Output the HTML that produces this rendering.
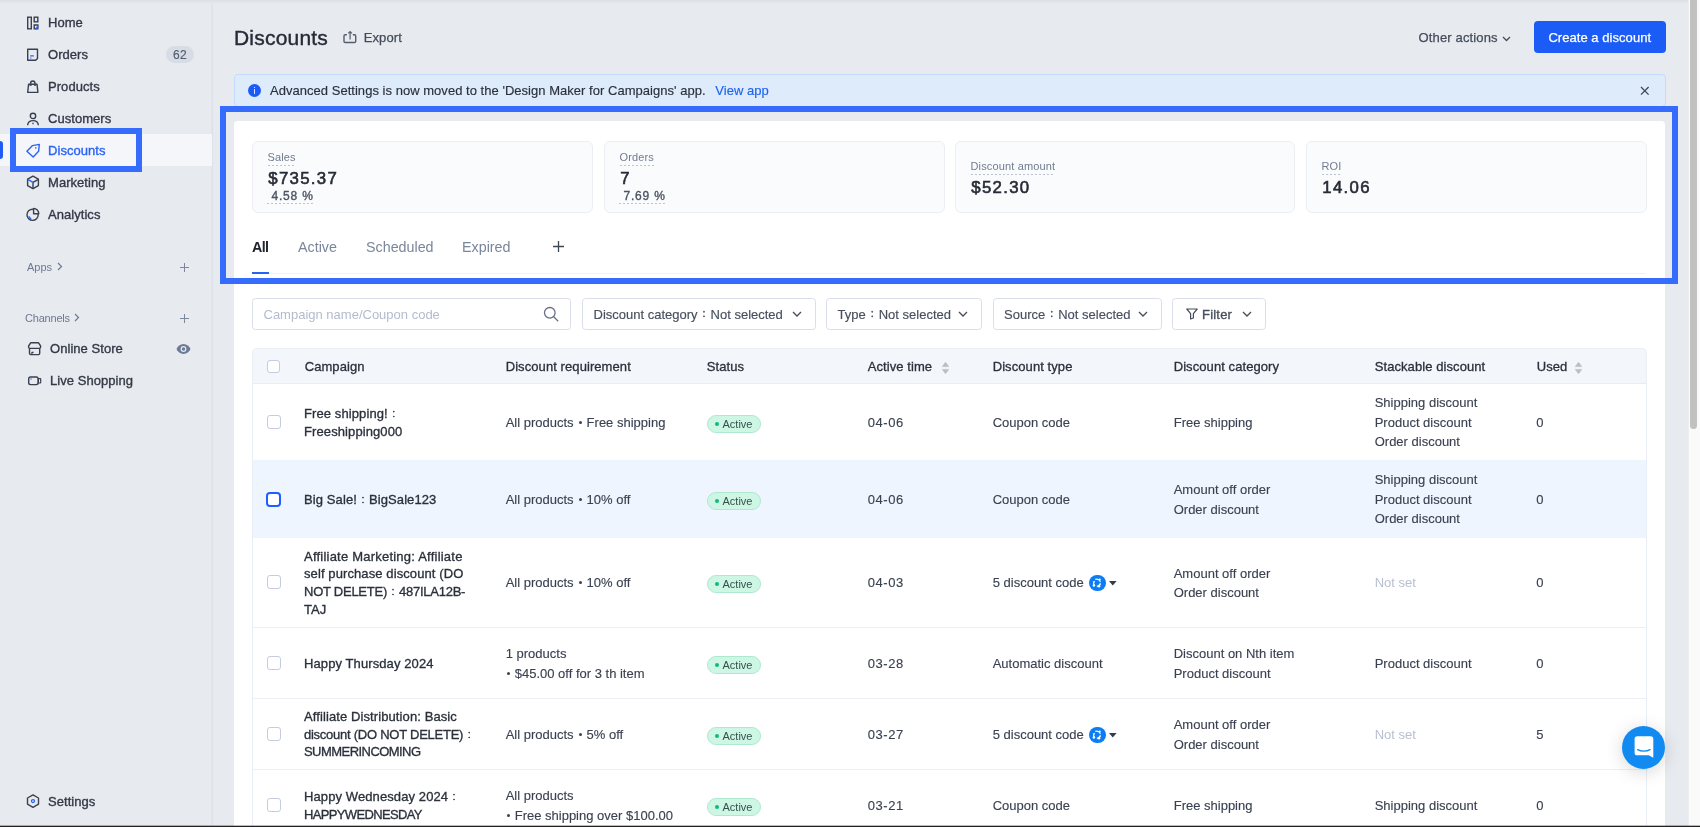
<!DOCTYPE html>
<html lang="en">
<head>
<meta charset="utf-8">
<title>Discounts</title>
<style>
*{box-sizing:border-box;margin:0;padding:0}
html,body{width:1700px;height:827px;overflow:hidden}
body{position:relative;background:#e7eaef;font-family:"Liberation Sans","Noto Sans CJK TC",sans-serif;font-size:13px;color:#2f3440;-webkit-font-smoothing:antialiased}
#app{position:absolute;left:0;top:0;width:1700px;height:827px;overflow:hidden;will-change:transform}
.abs{position:absolute}
svg{display:block}
/* top shade */
#topshade{left:0;top:0;width:1688px;height:4px;background:linear-gradient(#dcdfe4,#e7eaef)}
/* sidebar */
#sidebar{left:0;top:0;width:213px;height:827px;border-right:1px solid #dde1ea;box-shadow:inset -1px 0 0 rgba(221,225,234,.5)}
.nav{position:absolute;left:0;width:212px;height:32px}
.nav .ic{position:absolute;left:25px;top:8px;width:16px;height:16px}
.nav .tx{position:absolute;left:48px;top:1px;line-height:32px;font-size:13px;font-weight:400;color:#333946;-webkit-text-stroke:.35px #333946;letter-spacing:.05px;white-space:nowrap}
.nav.active{background:#f5f6fa}
.nav.active .tx{color:#2a63f6;-webkit-text-stroke-color:#2a63f6}
.sec{position:absolute;font-size:11px;color:#6d7a90;white-space:nowrap;line-height:14px}
.plus{position:absolute;width:9px;height:9px}
.plus:before{content:"";position:absolute;left:0;top:4px;width:9px;height:1px;background:#7c879b}
.plus:after{content:"";position:absolute;left:4px;top:0;width:1px;height:9px;background:#7c879b}
/* highlight boxes */
.hl{position:absolute;border:6px solid #366cfe;pointer-events:none}
/* header */
#title{left:234px;top:24px;font-size:21px;line-height:28px;font-weight:400;color:#262b36;-webkit-text-stroke:.4px #262b36;letter-spacing:.2px;white-space:nowrap}
#export{left:363.700px;top:29.500px;letter-spacing:.1px;-webkit-text-stroke:.25px #444c5b;font-size:13px;line-height:16px;color:#444c5b;white-space:nowrap}
#other{left:1418.500px;top:30px;letter-spacing:.15px;-webkit-text-stroke:.25px #444c5b;font-size:13px;line-height:16px;color:#444c5b;white-space:nowrap}
#create{left:1534px;top:21px;width:131.500px;height:32px;border-radius:4px;background:#1b5cf6;color:#fff;-webkit-text-stroke:.25px #fff;font-size:13px;line-height:33px;letter-spacing:.05px;text-align:center;white-space:nowrap}
/* banner */
#banner{left:234px;top:74px;width:1432px;height:33px;background:#ddebfb;border:1px solid #c4dcfb;border-radius:4px}
#banner .t{position:absolute;left:35px;top:8px;-webkit-text-stroke:.15px #2b303b;line-height:16px;font-size:13px;color:#2b303b;white-space:nowrap;letter-spacing:.03px}
#banner a{color:#1e63f0;-webkit-text-stroke:.15px #1e63f0;margin-left:6px;text-decoration:none}
/* card */
#card{left:234px;top:121px;width:1431px;height:720px;background:#fff;border-radius:4px 4px 0 0}
.stat{position:absolute;top:141px;height:72px;background:#fafbfc;border:1px solid #eceef3;border-radius:6px}
.stat .l{position:absolute;left:14.500px;letter-spacing:.15px;font-size:11px;line-height:13px;color:#6f7c91;white-space:nowrap;padding-bottom:2px;background:repeating-linear-gradient(to right,#bcc3cf 0,#bcc3cf 2px,transparent 2px,transparent 4px) left bottom/100% 1px no-repeat}
.stat .v{position:absolute;left:15.300px;font-size:16.800px;line-height:20px;font-weight:400;color:#262b36;-webkit-text-stroke:.6px #262b36;white-space:nowrap;letter-spacing:1.300px;padding-top:.5px}
.stat .p{position:absolute;left:14px;font-size:12px;line-height:14px;color:#4a5363;-webkit-text-stroke:.35px #4a5363;white-space:nowrap;padding:0 0 1px 4.500px;letter-spacing:.8px;background:repeating-linear-gradient(to right,#bcc3cf 0,#bcc3cf 2px,transparent 2px,transparent 4px) left bottom/100% 1px no-repeat}
.tab{position:absolute;top:238px;font-size:14.300px;line-height:18px;color:#7a869a;white-space:nowrap}
/* filters */
.fbox{position:absolute;top:298px;height:32px;border:1px solid #d9deea;border-radius:3.500px;background:#fff;font-size:13px;line-height:30px;color:#474f5e;-webkit-text-stroke:.15px #474f5e;white-space:nowrap}
.fbox .t{position:absolute;left:10.5px;top:.5px}
.chev{position:absolute;top:12px;width:10px;height:6px}
/* table */
#thead{left:252px;top:348px;width:1395px;height:36px;background:#f3f6fb;border-radius:5px 5px 0 0;border:1px solid #ebeef5;border-bottom:1px solid #e8ecf4}
.th{position:absolute;top:349px;height:35px;line-height:36px;font-size:13px;font-weight:400;color:#2b303b;-webkit-text-stroke:.3px #2b303b;white-space:nowrap;letter-spacing:.08px}
.row{position:absolute;left:252px;width:1395px;border-bottom:1px solid #eef0f5}
.row.sel{background:#eef5ff;border-bottom-color:#eef5ff}
.cb{position:absolute;left:15px;width:13.500px;height:13.500px;border:1px solid #c6cce0;border-radius:3px;background:#fff}
.cell{position:absolute;top:0;height:100%;display:flex;align-items:center;padding-top:2px;font-size:13px;line-height:19.4px;color:#3a4150;-webkit-text-stroke:.12px #3a4150;white-space:nowrap}
.cell.camp{line-height:17.7px;color:#2b303b;letter-spacing:.1px;-webkit-text-stroke:.32px #2b303b}
.cell.mut{color:#b7bfd0;-webkit-text-stroke:0}
.badge{position:absolute;left:454.5px;width:54px;height:18px;border:1px solid #ade9cf;background:#cdf7e4;border-radius:9px;font-size:11px;line-height:16px;color:#37504d;padding-left:15px;white-space:nowrap}
.badge:before{content:"";position:absolute;left:7px;top:6px;width:4px;height:4px;border-radius:50%;background:#10b981}
.dot{display:inline-block;width:3px;height:3px;border-radius:50%;background:#3a4150;vertical-align:middle;margin:0 5px 0 5px;position:relative;top:-1px}
.aff{position:absolute;margin-top:.6px;width:16.600px;height:16.600px;border-radius:50%;background:#0c7df4}
.caret{position:absolute;width:0;height:0;border-left:3.800px solid transparent;border-right:3.800px solid transparent;border-top:4.300px solid #333c4c}
.fc{display:inline-block;width:13px;text-align:center;font-size:8.5px;line-height:1;vertical-align:1.400px;-webkit-text-stroke:.4px currentColor}
.camp .fc{font-size:7.500px;vertical-align:1px;width:12px;-webkit-text-stroke:.5px #2b303b}
.r2 .cell{padding-top:1px}
/* scrollbar */
#sbtrack{left:1688px;top:0;width:12px;height:827px;background:#fafafa;border-left:1px solid #eeeeee}
#sbthumb{left:1690px;top:-6px;width:7px;height:435px;border-radius:4px;background:#c1c1c1}
#bottomline{left:0;top:825px;width:1700px;height:2px;background:linear-gradient(rgba(30,30,30,.3) 0,rgba(30,30,30,.3) 50%,#222 50%)}
#chat{left:1622px;top:725.500px;width:43px;height:43px;border-radius:50%;background:#118af2;box-shadow:0 3px 18px rgba(0,0,0,.16)}
</style>
</head>
<body>
<div id="app">

<!-- SIDEBAR -->
<div class="abs" id="sidebar">
  <div class="nav" style="top:6px"><div class="ic" id="ic-home"><svg width="16" height="16" viewBox="0 0 16 16" fill="none" stroke="#3a404d" stroke-width="1.4"><rect x="2.7" y="3.2" width="3.6" height="11.6"/><rect x="9.2" y="3.2" width="3.6" height="4.6"/><path d="M12.8 11v3.8H9.2V11z"/><path d="M12.8 11.2c0 2.2-1 3.4-2.6 3.6" stroke="#2a63f6" stroke-width="1.6"/></svg></div><div class="tx">Home</div></div>
  <div class="nav" style="top:38px"><div class="ic" id="ic-orders"><svg width="16" height="16" viewBox="0 0 16 16" fill="none" stroke="#3a404d" stroke-width="1.4"><path d="M2.7 3.2h9.8v9.2l-1.8 1.9H2.7z" stroke-linejoin="round"/><path d="M5.200 9.800h3.600M5.200 12h1.300" stroke="#2a63f6" stroke-width="1.150"/></svg></div><div class="tx">Orders</div></div>
  <div class="nav" style="top:70px"><div class="ic" id="ic-products"><svg width="16" height="16" viewBox="0 0 16 16" fill="none" stroke="#3a404d" stroke-width="1.4"><path d="M3.6 6.2h8.4l.9 8.2H2.7z" stroke-linejoin="round"/><path d="M5.6 7.8V5.2a2.2 2.2 0 0 1 4.4 0v2.6"/><path d="M4.6 7.3h2M9 7.3h2" stroke="#2a63f6" stroke-width="1.2"/></svg></div><div class="tx">Products</div></div>
  <div class="nav" style="top:102px"><div class="ic" id="ic-customers"><svg width="16" height="16" viewBox="0 0 16 16" fill="none" stroke="#3a404d" stroke-width="1.4"><circle cx="8" cy="5.9" r="2.7"/><path d="M2.6 15.2c.3-3 2.500-4.600 5.400-4.600s5.100 1.600 5.400 4.600"/><circle cx="8" cy="13.400" r=".9" fill="#2a63f6" stroke="none"/></svg></div><div class="tx">Customers</div></div>
  <div class="nav active" style="top:134px"><div class="ic" id="ic-discounts"><svg width="16" height="16" viewBox="0 0 16 16" fill="none" stroke="#2a63f6" stroke-width="1.4" stroke-linejoin="round"><path d="M1.900 9.200 7.500 3.600 14.300 2.400 13.600 9.200 8.200 15z"/><circle cx="10.800" cy="5.900" r=".8" fill="#2a63f6" stroke="none"/></svg></div><div class="tx">Discounts</div></div>
  <div class="nav" style="top:166px"><div class="ic" id="ic-marketing"><svg width="16" height="16" viewBox="0 0 16 16" fill="none" stroke="#3a404d" stroke-width="1.4" stroke-linejoin="round"><path d="M8 2.200 13.400 5.200v6.400L8 14.700 2.600 11.600V5.200z"/><path d="M8 8.400v6.200M8 8.400l5.300-3.100"/><path d="M2.800 5.400 8 8.400" stroke="#2a63f6"/></svg></div><div class="tx">Marketing</div></div>
  <div class="nav" style="top:198px"><div class="ic" id="ic-analytics"><svg width="16" height="16" viewBox="0 0 16 16" fill="none" stroke="#3a404d" stroke-width="1.4"><circle cx="7.600" cy="8.800" r="5.600"/><path d="M8.600 2.400a5.400 5.400 0 0 1 5.200 5.400H8.600z" fill="#e7eaef" stroke-linejoin="round"/><path d="M3.700 10.200c.5 1.300 1.300 2.100 2.500 2.600" stroke="#2a63f6" stroke-width="1.3"/></svg></div><div class="tx">Analytics</div></div>
  <div class="sec" style="left:27px;top:260px">Apps</div>
  <div class="plus" style="left:180px;top:263px"></div>
  <div class="sec" style="left:25px;top:311px;letter-spacing:-.2px">Channels</div>
  <div class="plus" style="left:180px;top:314px"></div>
  <div class="nav" style="top:332px"><div class="ic" id="ic-store" style="left:26px"><svg width="17" height="16" viewBox="0 0 17 16" fill="none" stroke="#3a404d" stroke-width="1.400" stroke-linejoin="round"><path d="M4.800 2.700h7.600l2.200 3.300v1.100a1.300 1.300 0 0 1-1.300 1.300H3.900a1.300 1.300 0 0 1-1.300-1.300V6z"/><path d="M3.500 8.400v4.900a1.300 1.300 0 0 0 1.300 1.300h7.600a1.300 1.300 0 0 0 1.300-1.300V8.400"/><path d="M5.900 14.400v-2h1.700" stroke-width="1.200"/></svg></div><div class="tx" style="left:50px">Online Store</div></div>
  <div class="nav" style="top:364px"><div class="ic" id="ic-live" style="left:26px"><svg width="17" height="16" viewBox="0 0 17 16" fill="none" stroke="#3a404d" stroke-width="1.400" stroke-linejoin="round"><rect x="2.700" y="5" width="9.400" height="7.600" rx="1.800"/><rect x="12.400" y="6.700" width="2.300" height="4.300" rx=".4" stroke-width="1.200"/><circle cx="5" cy="7" r=".7" fill="#2a63f6" stroke="none"/></svg></div><div class="tx" style="left:50px">Live Shopping</div></div>

  <div class="abs" style="left:57px;top:262px"><svg width="6" height="9" viewBox="0 0 6 9" fill="none" stroke="#6d7a90" stroke-width="1.200"><path d="M1 1l3.500 3.500L1 8"/></svg></div>
  <div class="abs" style="left:73.500px;top:313px"><svg width="6" height="9" viewBox="0 0 6 9" fill="none" stroke="#6d7a90" stroke-width="1.200"><path d="M1 1l3.500 3.500L1 8"/></svg></div>
  <div class="abs" style="left:176px;top:343px"><svg width="15" height="12" viewBox="0 0 15 12"><path d="M7.500 1C4.200 1 1.700 3.200.500 6c1.200 2.800 3.700 5 7 5s5.800-2.200 7-5c-1.200-2.800-3.700-5-7-5z" fill="#6b7b96"/><circle cx="7.500" cy="6" r="2.900" fill="#e7eaef"/><circle cx="7.500" cy="6" r="1.700" fill="#6b7b96"/></svg></div>
  <div class="nav" style="top:785px"><div class="ic" id="ic-settings"><svg width="16" height="16" viewBox="0 0 16 16" fill="none" stroke="#3a404d" stroke-width="1.4" stroke-linejoin="round"><path d="M8 1.900 13.500 5v6.200L8 14.300 2.500 11.200V5z"/><circle cx="8" cy="8.100" r="1.500" stroke="#2a63f6" stroke-width="1.300"/></svg></div><div class="tx">Settings</div></div>
</div>
<div class="abs" style="left:0;top:141px;width:3px;height:18px;background:#1f5bf5;border-radius:0 3px 3px 0"></div>
<div class="abs" style="left:166px;top:46px;width:28px;height:17px;border-radius:9px;background:#d8dce5;font-size:12px;line-height:18px;text-align:center;color:#566074;-webkit-text-stroke:.2px #566074;letter-spacing:.3px">62</div>

<!-- HEADER -->
<div class="abs" id="title">Discounts</div>
<div class="abs" id="export">Export</div>
<div class="abs" id="other">Other actions</div>
<div class="abs" id="create">Create a discount</div>


<div class="abs" style="left:342px;top:29px"><svg width="16" height="16" viewBox="0 0 16 16" fill="none" stroke="#565e6e" stroke-width="1.300"><path d="M4.900 5.700H3.200a1.200 1.200 0 0 0-1.200 1.200v5.400a1.200 1.200 0 0 0 1.200 1.200h9.300a1.200 1.200 0 0 0 1.200-1.200V6.900a1.200 1.200 0 0 0-1.200-1.200h-1.700" stroke-width="1.400"/><path d="M8.100 10.400V3M6.300 4.400 8.100 2.600 9.900 4.400" stroke-width="1.200"/></svg></div>
<div class="abs" style="left:1502px;top:36px"><svg width="9" height="6" viewBox="0 0 9 6" fill="none" stroke="#444c5b" stroke-width="1.300"><path d="M1 1l3.500 3.500L8 1"/></svg></div>
<!-- BANNER -->
<div class="abs" id="banner">
  <div class="abs" style="left:13px;top:9px;width:13px;height:13px;border-radius:50%;background:#1c5cf5"><div class="abs" style="left:5.900px;top:2.700px;width:1.300px;height:1.400px;background:rgba(255,255,255,.85)"></div><div class="abs" style="left:5.900px;top:5.300px;width:1.300px;height:4.800px;background:rgba(255,255,255,.85)"></div></div>
  <div class="t">Advanced Settings is now moved to the 'Design Maker for Campaigns' app. <a>View app</a></div>
</div>

<div class="abs" style="left:1639.500px;top:85.500px"><svg width="10" height="10" viewBox="0 0 10 10" fill="none" stroke="#3f4654" stroke-width="1.300"><path d="M1 1l7.600 7.600M8.600 1l-7.600 7.600"/></svg></div>
<!-- CARD -->
<div class="abs" id="card"></div>

<div class="stat" style="left:252px;width:341px"><div class="l" style="top:9px">Sales</div><div class="v" style="top:26px">$735.37</div><div class="p" style="top:47px">4.58 %</div></div>
<div class="stat" style="left:604px;width:341px"><div class="l" style="top:9px">Orders</div><div class="v" style="top:26px">7</div><div class="p" style="top:47px">7.69 %</div></div>
<div class="stat" style="left:955px;width:340px"><div class="l" style="top:18px">Discount amount</div><div class="v" style="top:35px">$52.30</div></div>
<div class="stat" style="left:1306px;width:341px"><div class="l" style="top:18px">ROI</div><div class="v" style="top:35px">14.06</div></div>

<div class="abs" style="left:252px;top:273px;width:1394px;height:1px;background:#eff1f5"></div>
<div class="tab" style="left:252px;color:#20242e;font-weight:700;letter-spacing:-.6px">All</div>
<div class="tab" style="left:298px">Active</div>
<div class="tab" style="left:366px">Scheduled</div>
<div class="tab" style="left:462px">Expired</div>
<div class="abs" style="left:252px;top:272px;width:17px;height:2px;background:#2464f5"></div>
<div class="abs" style="left:553px;top:241px"><svg width="11" height="11" viewBox="0 0 11 11" stroke="#3f4654" stroke-width="1.300"><path d="M5.500 0v11M0 5.500h11"/></svg></div>

<!-- FILTERS -->
<div class="fbox" style="left:252px;width:319px"><div class="t" style="color:#b3bccd;-webkit-text-stroke:0;left:10.500px;top:.5px">Campaign name/Coupon code</div></div>
<div class="fbox" style="left:582px;width:233.500px"><div class="t">Discount category<span class="fc">：</span>Not selected</div></div>
<div class="fbox" style="left:826px;width:156px"><div class="t">Type<span class="fc">：</span>Not selected</div></div>
<div class="fbox" style="left:992.500px;width:169.500px"><div class="t">Source<span class="fc">：</span>Not selected</div></div>
<div class="fbox" style="left:1172px;width:94px"><div class="t" style="left:29px;-webkit-text-stroke:.35px #474f5e;letter-spacing:.2px">Filter</div></div>


<div class="abs" style="left:543px;top:306px"><svg width="16" height="16" viewBox="0 0 16 16" fill="none" stroke="#677186" stroke-width="1.300"><circle cx="6.800" cy="6.800" r="5.300"/><path d="M10.700 10.700l4.500 4.500"/></svg></div>
<div class="abs" style="left:792px;top:311px"><svg width="10" height="7" viewBox="0 0 10 7" fill="none" stroke="#444c5b" stroke-width="1.300"><path d="M1 1l4 4 4-4"/></svg></div>
<div class="abs" style="left:958px;top:311px"><svg width="10" height="7" viewBox="0 0 10 7" fill="none" stroke="#444c5b" stroke-width="1.300"><path d="M1 1l4 4 4-4"/></svg></div>
<div class="abs" style="left:1138px;top:311px"><svg width="10" height="7" viewBox="0 0 10 7" fill="none" stroke="#444c5b" stroke-width="1.300"><path d="M1 1l4 4 4-4"/></svg></div>
<div class="abs" style="left:1242px;top:311px"><svg width="10" height="7" viewBox="0 0 10 7" fill="none" stroke="#444c5b" stroke-width="1.300"><path d="M1 1l4 4 4-4"/></svg></div>
<div class="abs" style="left:1186px;top:308px"><svg width="12" height="12" viewBox="0 0 12 12" fill="none" stroke="#444c5b" stroke-width="1.200" stroke-linejoin="round"><path d="M.800 1h10.400L7.400 5.600V10L4.600 11V5.600z"/></svg></div>
<!-- TABLE -->
<div class="abs" id="thead"></div>
<div class="cb" style="left:266.800px;top:359.800px"></div>
<div class="th" style="left:304.700px">Campaign</div>
<div class="th" style="left:505.700px">Discount requirement</div>
<div class="th" style="left:706.700px">Status</div>
<div class="th" style="left:867.700px">Active time</div>
<div class="th" style="left:992.700px">Discount type</div>
<div class="th" style="left:1173.700px">Discount category</div>
<div class="th" style="left:1374.700px">Stackable discount</div>
<div class="th" style="left:1536.700px">Used</div>


<div class="abs" style="left:942px;top:361.500px"><svg width="7" height="12" viewBox="0 0 7 12"><path d="M3.500 .3 6.700 4.600H.300z" fill="#b9bdc6" stroke="#b9bdc6" stroke-width=".6" stroke-linejoin="round"/><path d="M3.500 11.700 6.700 7.400H.300z" fill="#b9bdc6" stroke="#b9bdc6" stroke-width=".6" stroke-linejoin="round"/></svg></div>
<div class="abs" style="left:1575px;top:361.500px"><svg width="7" height="12" viewBox="0 0 7 12"><path d="M3.500 .3 6.700 4.600H.300z" fill="#b9bdc6" stroke="#b9bdc6" stroke-width=".6" stroke-linejoin="round"/><path d="M3.500 11.700 6.700 7.400H.300z" fill="#b9bdc6" stroke="#b9bdc6" stroke-width=".6" stroke-linejoin="round"/></svg></div>
<div class="row" style="top:384px;height:76px;border-bottom-color:#fff">
  <div class="cb" style="top:31px"></div>
  <div class="cell camp" style="left:52px"><div>Free shipping!<span class="fc">：</span><br>Freeshipping000</div></div>
  <div class="cell" style="left:253.700px"><div>All products<span class="dot"></span>Free shipping</div></div>
  <div class="badge" style="top:31px">Active</div>
  <div class="cell" style="left:615.700px;letter-spacing:.6px"><div>04-06</div></div>
  <div class="cell" style="left:740.700px"><div>Coupon code</div></div>
  <div class="cell" style="left:921.700px"><div>Free shipping</div></div>
  <div class="cell" style="left:1122.700px"><div>Shipping discount<br>Product discount<br>Order discount</div></div>
  <div class="cell" style="left:1284.200px"><div>0</div></div>
</div>
<div class="row sel" style="top:460px;height:78px">
  <div class="cb" style="border:2px solid #1f5efc;left:14.300px;width:14.500px;height:14.500px;top:32px;border-radius:4px"></div>
  <div class="cell camp" style="left:52px"><div>Big Sale!<span class="fc">：</span>BigSale123</div></div>
  <div class="cell" style="left:253.700px"><div>All products<span class="dot"></span>10% off</div></div>
  <div class="badge" style="top:32px">Active</div>
  <div class="cell" style="left:615.700px;letter-spacing:.6px"><div>04-06</div></div>
  <div class="cell" style="left:740.700px"><div>Coupon code</div></div>
  <div class="cell" style="left:921.700px"><div>Amount off order<br>Order discount</div></div>
  <div class="cell" style="left:1122.700px"><div>Shipping discount<br>Product discount<br>Order discount</div></div>
  <div class="cell" style="left:1284.200px"><div>0</div></div>
</div>
<div class="row r2" style="top:538px;height:90px">
  <div class="cb" style="top:37px"></div>
  <div class="cell camp" style="left:52px"><div><span style="letter-spacing:.22px">Affiliate Marketing: Affiliate</span><br>self purchase discount (DO<br><span style="letter-spacing:-.25px">NOT DELETE)<span class="fc">：</span>487ILA12B-</span><br>TAJ</div></div>
  <div class="cell" style="left:253.700px"><div>All products<span class="dot"></span>10% off</div></div>
  <div class="badge" style="top:37px">Active</div>
  <div class="cell" style="left:615.700px;letter-spacing:.6px"><div>04-03</div></div>
  <div class="cell" style="left:740.700px"><div>5 discount code</div></div>
  <div class="aff" style="left:837px;top:36px"><svg width="16" height="16" viewBox="0 0 16 16" fill="none" stroke="#fff" stroke-width="1.100" stroke-linecap="round"><path d="M6.600 4.300c2-.5 3.700.3 4.600 2.200"/><path d="M11.200 8.200c0 1.200-.5 2.300-1.400 3"/><path d="M4.900 6.600c-.5 1.300-.3 2.500.4 3.600"/><circle cx="10.700" cy="4.600" r="1.150" fill="#fff" stroke="none"/><circle cx="4.900" cy="10.500" r="1.250" fill="#fff" stroke="none"/><circle cx="5.200" cy="6.700" r=".8" fill="#fff" stroke="none"/><circle cx="10" cy="11.200" r="1.250" fill="#fff" stroke="none"/><path d="M8.300 11.300l2.800-1.700" stroke-width="1.200"/></svg></div><div class="abs" style="left:856.500px;top:43px"><svg width="8" height="5" viewBox="0 0 8 5"><path d="M0 0h7.600L3.800 4.400z" fill="#333c4c"/></svg></div>
  <div class="cell" style="left:921.700px"><div>Amount off order<br>Order discount</div></div>
  <div class="cell mut" style="left:1122.700px"><div>Not set</div></div>
  <div class="cell" style="left:1284.200px"><div>0</div></div>
</div>
<div class="row r2" style="top:628px;height:71px">
  <div class="cb" style="top:28px"></div>
  <div class="cell camp" style="left:52px"><div>Happy Thursday 2024</div></div>
  <div class="cell" style="left:253.700px"><div>1 products<br><span class="dot" style="margin-left:1px"></span>$45.00 off for 3 th item</div></div>
  <div class="badge" style="top:28px">Active</div>
  <div class="cell" style="left:615.700px;letter-spacing:.6px"><div>03-28</div></div>
  <div class="cell" style="left:740.700px"><div>Automatic discount</div></div>
  <div class="cell" style="left:921.700px"><div>Discount on Nth item<br>Product discount</div></div>
  <div class="cell" style="left:1122.700px"><div>Product discount</div></div>
  <div class="cell" style="left:1284.200px"><div>0</div></div>
</div>
<div class="row r2" style="top:699px;height:71px">
  <div class="cb" style="top:28px"></div>
  <div class="cell camp" style="left:52px"><div>Affiliate Distribution: Basic<br><span style="letter-spacing:-.25px">discount (DO NOT DELETE)<span class="fc">：</span></span><br><span style="letter-spacing:-.55px">SUMMERINCOMING</span></div></div>
  <div class="cell" style="left:253.700px"><div>All products<span class="dot"></span>5% off</div></div>
  <div class="badge" style="top:28px">Active</div>
  <div class="cell" style="left:615.700px;letter-spacing:.6px"><div>03-27</div></div>
  <div class="cell" style="left:740.700px"><div>5 discount code</div></div>
  <div class="aff" style="left:837px;top:27px"><svg width="16" height="16" viewBox="0 0 16 16" fill="none" stroke="#fff" stroke-width="1.100" stroke-linecap="round"><path d="M6.600 4.300c2-.5 3.700.3 4.600 2.200"/><path d="M11.200 8.200c0 1.200-.5 2.300-1.400 3"/><path d="M4.900 6.600c-.5 1.300-.3 2.500.4 3.600"/><circle cx="10.700" cy="4.600" r="1.150" fill="#fff" stroke="none"/><circle cx="4.900" cy="10.500" r="1.250" fill="#fff" stroke="none"/><circle cx="5.200" cy="6.700" r=".8" fill="#fff" stroke="none"/><circle cx="10" cy="11.200" r="1.250" fill="#fff" stroke="none"/><path d="M8.300 11.300l2.800-1.700" stroke-width="1.200"/></svg></div><div class="abs" style="left:856.500px;top:34px"><svg width="8" height="5" viewBox="0 0 8 5"><path d="M0 0h7.600L3.800 4.400z" fill="#333c4c"/></svg></div>
  <div class="cell" style="left:921.700px"><div>Amount off order<br>Order discount</div></div>
  <div class="cell mut" style="left:1122.700px"><div>Not set</div></div>
  <div class="cell" style="left:1284.200px"><div>5</div></div>
</div>
<div class="row r2" style="top:770px;height:71px">
  <div class="cb" style="top:28px"></div>
  <div class="cell camp" style="left:52px"><div>Happy Wednesday 2024<span class="fc">：</span><br><span style="letter-spacing:-.65px">HAPPYWEDNESDAY</span></div></div>
  <div class="cell" style="left:253.700px"><div>All products<br><span class="dot" style="margin-left:1px"></span>Free shipping over $100.00</div></div>
  <div class="badge" style="top:28px">Active</div>
  <div class="cell" style="left:615.700px;letter-spacing:.6px"><div>03-21</div></div>
  <div class="cell" style="left:740.700px"><div>Coupon code</div></div>
  <div class="cell" style="left:921.700px"><div>Free shipping</div></div>
  <div class="cell" style="left:1122.700px"><div>Shipping discount</div></div>
  <div class="cell" style="left:1284.200px"><div>0</div></div>
</div>

<div class="abs" style="left:1666px;top:0;width:22px;height:827px;background:#e7eaef"></div>
<div class="abs" style="left:252px;top:383px;width:1px;height:444px;background:#e9edf5"></div>
<div class="abs" style="left:1646px;top:383px;width:1px;height:444px;background:#e9edf5"></div>
<div class="abs" id="topshade"></div>
<!-- highlight boxes -->
<div class="hl" style="left:10px;top:128px;width:132px;height:44px"></div>
<div class="hl" style="left:220px;top:106px;width:1458px;height:178px"></div>

<!-- chat -->
<div class="abs" id="chat"><svg width="43" height="43" viewBox="0 0 43 43"><path d="M15.200 10.300H28.700a2.600 2.600 0 0 1 2.600 2.600V31.800L26.700 29.300H15.200a2.600 2.600 0 0 1-2.600-2.600V12.900a2.600 2.600 0 0 1 2.600-2.600z" fill="#fff"/><path d="M15.600 23.600c3.400 2 9 2 12.400 0" fill="none" stroke="#118af2" stroke-width="1.300" stroke-linecap="round"/></svg></div>

<!-- scrollbar + bottom -->
<div class="abs" id="sbtrack"></div>
<div class="abs" id="sbthumb"></div>
<div class="abs" id="bottomline"></div>
</div>
</body>
</html>
